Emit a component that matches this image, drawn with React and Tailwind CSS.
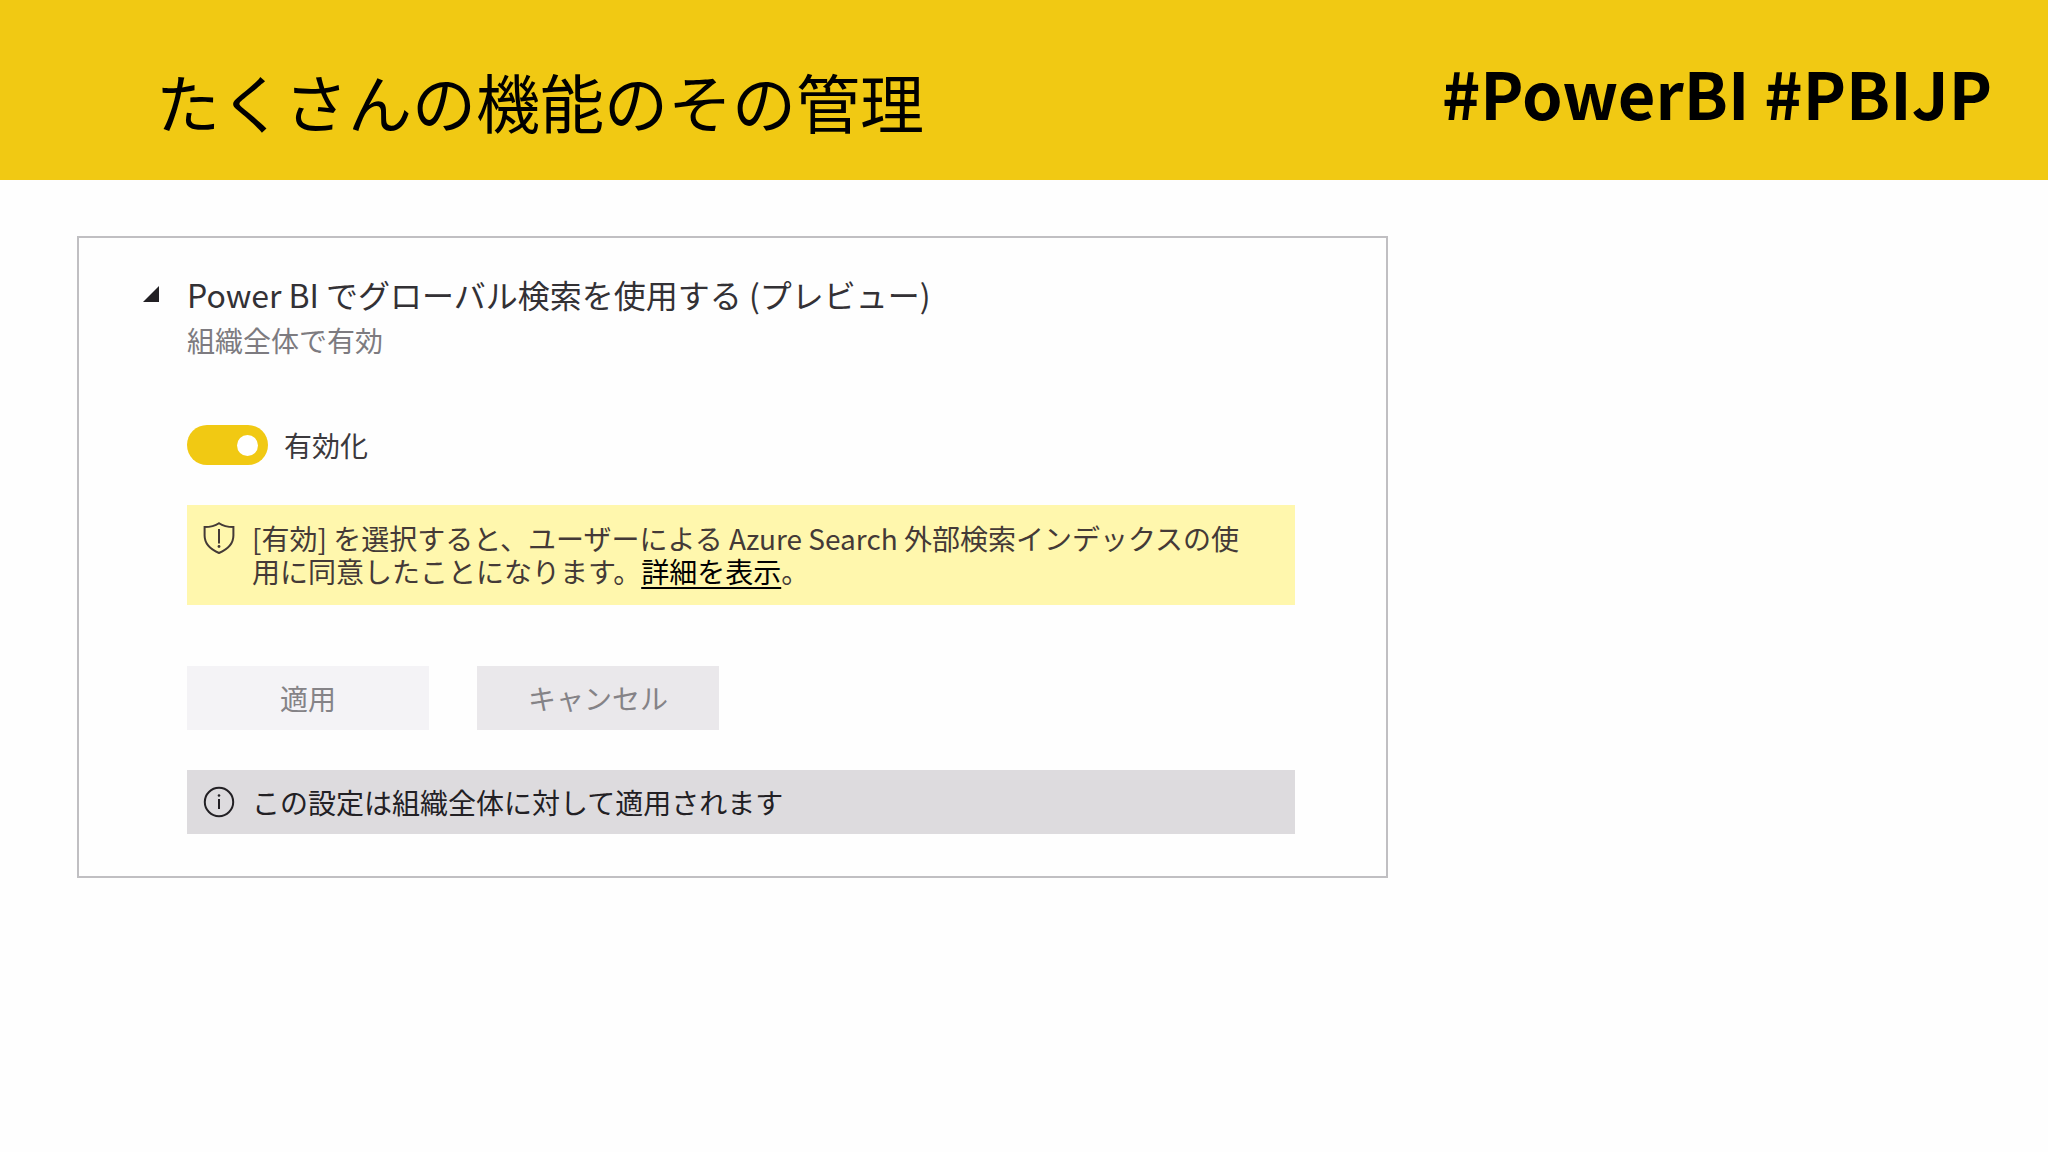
import React, { useState } from "react";

const ShieldIcon = () => (
    <svg className="w-8 h-8 shrink-0" viewBox="0 0 32 32" fill="none" stroke="currentColor" strokeWidth="2" aria-hidden="true">
        <path d="M16 1.2C12.5 3.6 7.5 5 1.6 5v8.5c0 8 5 13.500 14.400 17.500 9.400-4 14.400-9.500 14.400-17.500V5C24.500 5 19.500 3.600 16 1.200z"/>
        <path d="M16 7v14.500"/>
        <circle cx="16" cy="24.500" r="1.400" fill="currentColor" stroke="none"/>
    </svg>
);

const InfoIcon = () => (
    <svg className="w-8 h-8 shrink-0" viewBox="0 0 32 32" fill="none" stroke="currentColor" strokeWidth="2" aria-hidden="true">
        <circle cx="16" cy="16" r="14.200"/>
        <path d="M16 13v10"/>
        <circle cx="16" cy="9.500" r="1.300" fill="currentColor" stroke="none"/>
    </svg>
);

const Header = () => (
    <header className="h-[180px] bg-[#f1c913] text-black flex items-center justify-between pl-[156px] pr-[56px] pt-5">
        <h1 className="text-[64px] leading-[80px]">たくさんの機能のその管理</h1>
        <p className="text-[65px] leading-[80px] font-bold pb-4">#PowerBI #PBIJP</p>
    </header>
);

const Toggle = ({ checked, onChange }) => (
    <label className="flex items-center gap-4 w-fit cursor-pointer">
        <input type="checkbox" role="switch" className="peer sr-only" checked={checked} onChange={onChange}/>
        <span className="w-[81px] h-10 px-[10px] rounded-full bg-gray-400 flex items-center peer-checked:bg-[#f1c913] peer-checked:justify-end">
            <span className="size-[21px] rounded-full bg-white"/>
        </span>
        <span className="text-[28px] leading-[40px] text-[#3b393d]">有効化</span>
    </label>
);

const SettingCard = () => {

    const [ open, setOpen ] = useState(true);
    const [ enabled, setEnabled ] = useState(true);

    return (
        <section className="w-[64%] ml-[77px] border-2 border-[#c0bfc2] pt-8 pb-[42px] pr-[91px] pl-[60px]">
            <div className="flex items-start">
                <button
                    onClick={() => setOpen(!open)}
                    aria-expanded={open}
                    aria-label="Power BI でグローバル検索を使用する"
                    className="w-12 h-12 shrink-0 flex items-center pl-1"
                >
                    <svg className="size-4" viewBox="0 0 16 16" fill="#222024" aria-hidden="true">
                        <path d="M16 0v16H0z"/>
                    </svg>
                </button>
                <div>
                    <h2 className="text-[32px] leading-[48px] text-[#333135]">
                        Power BI でグローバル検索を使用する (プレビュー)
                    </h2>
                    <p className="mt-0.5 text-[28px] leading-[40px] text-[#7d7b80]">組織全体で有効</p>
                </div>
            </div>

            {open && (
                <div className="pl-12 pt-[65px]">
                    <Toggle checked={enabled} onChange={() => setEnabled(!enabled)}/>

                    <div className="mt-10 bg-[#fff7ad] text-[#443a37] flex items-start gap-[17px] pl-4 pr-8 py-[17px]">
                        <ShieldIcon/>
                        <p className="text-[28px] leading-[33px]">
                            [有効] を選択すると、ユーザーによる Azure Search 外部検索インデックスの使用に同意したことになります。<a href="#details" className="text-black underline underline-offset-4 decoration-2">詳細を表示</a>。
                        </p>
                    </div>

                    <div className="mt-[61px] flex gap-12 text-[28px] leading-[64px] text-[#858387]">
                        <button disabled className="w-[242px] h-16 bg-[#f4f3f6]">適用</button>
                        <button className="w-[242px] h-16 bg-[#eae8eb]">キャンセル</button>
                    </div>

                    <div className="mt-10 h-16 bg-[#dddbde] text-[#222024] flex items-center gap-[17px] pl-4 pr-8">
                        <InfoIcon/>
                        <p className="text-[28px] leading-[40px]">この設定は組織全体に対して適用されます</p>
                    </div>
                </div>
            )}
        </section>
    );
};

const App = () => (
    <div className="min-h-screen bg-[#fefefe] font-['Noto_Sans_CJK_JP',sans-serif]" lang="ja">
        <Header/>
        <main className="pt-14">
            <SettingCard/>
        </main>
    </div>
);

export default App;
